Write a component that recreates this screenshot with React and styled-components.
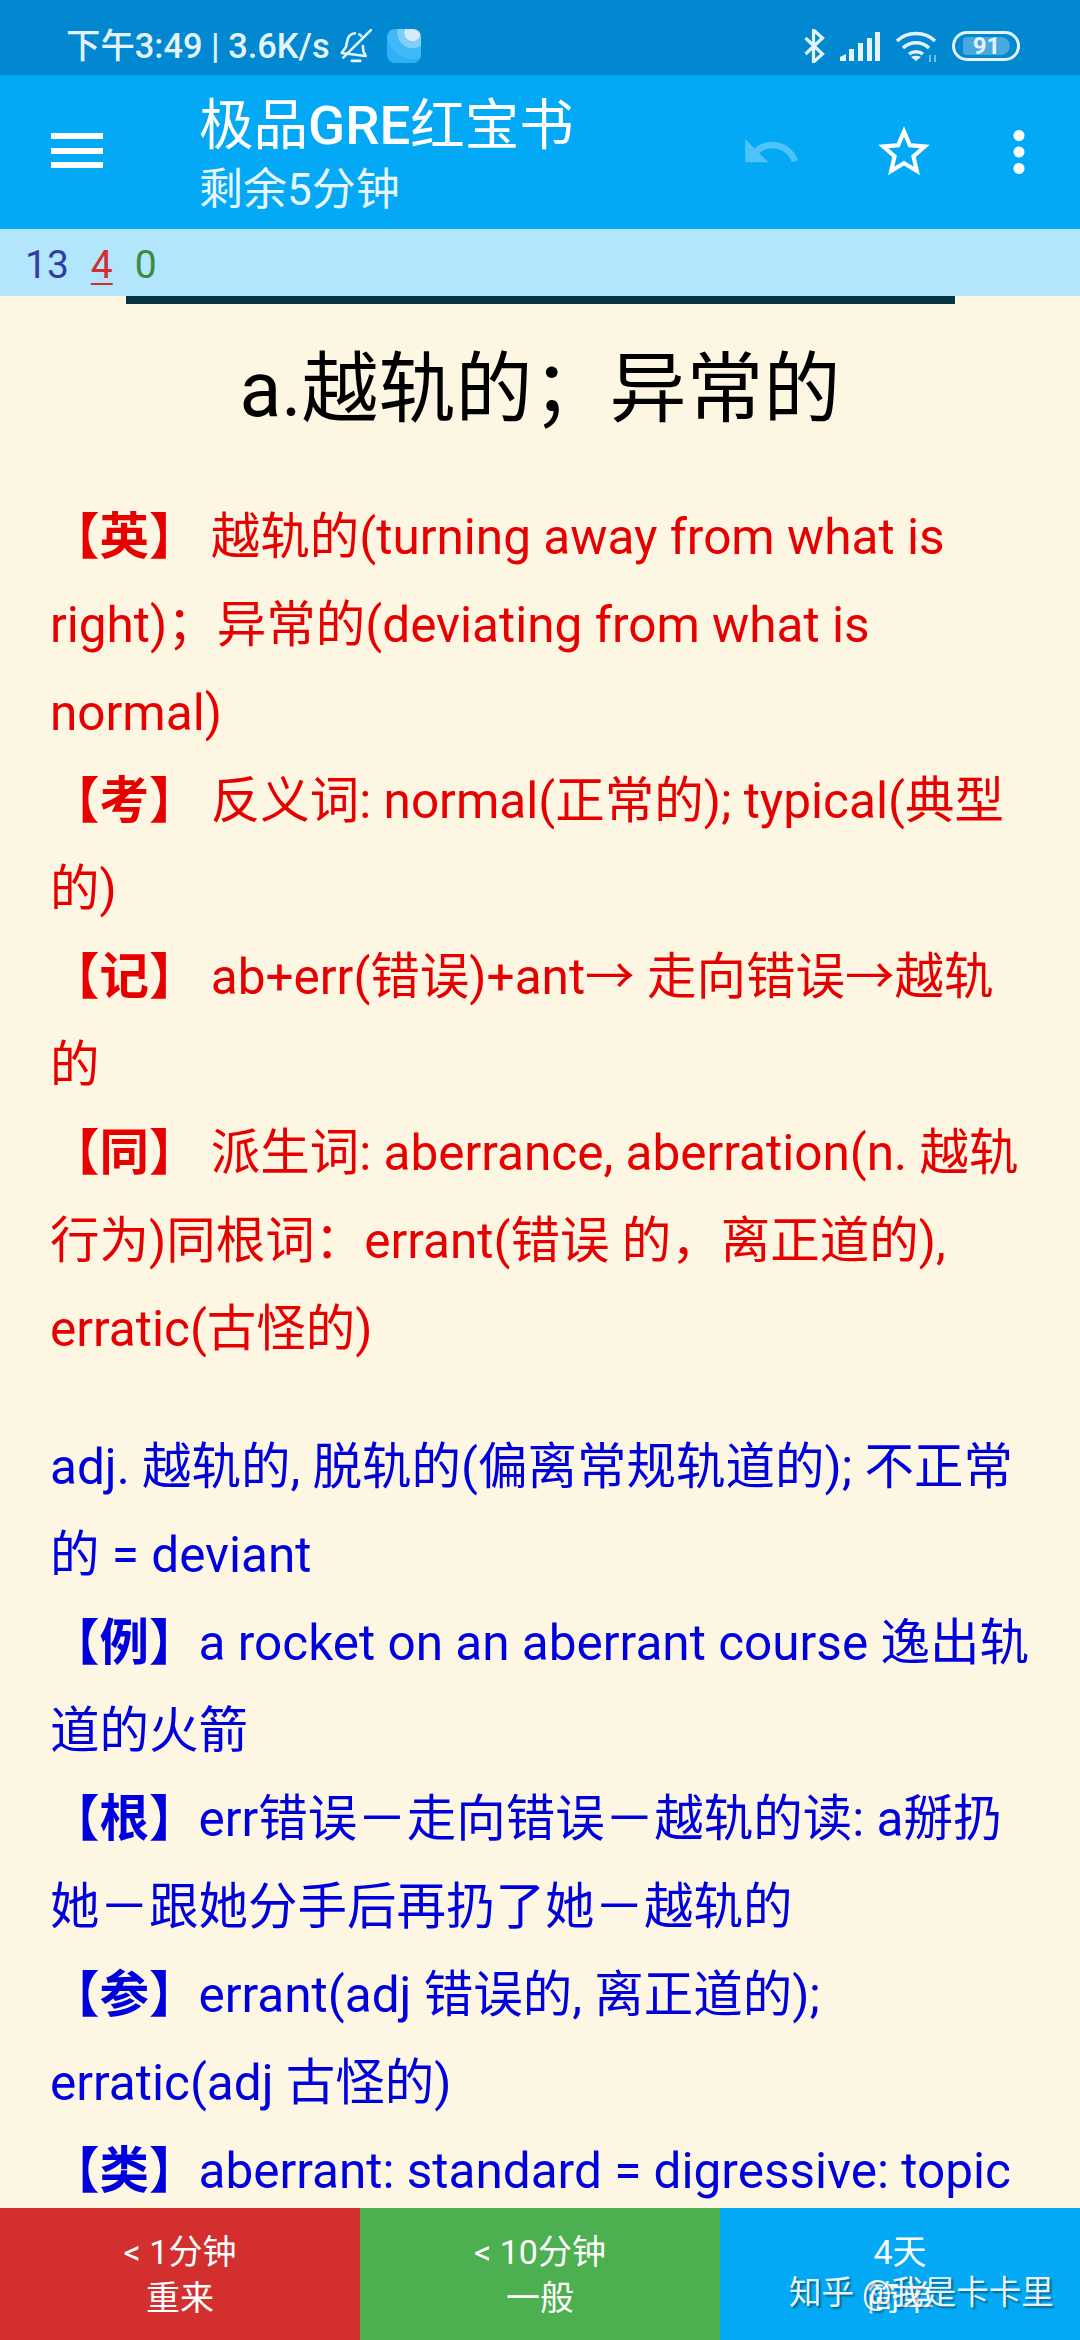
import React from 'react';
import styled, { createGlobalStyle } from 'styled-components';

const GlobalStyle = createGlobalStyle`
  html, body { margin: 0; padding: 0; background: #fdf6e3; }
  * { box-sizing: border-box; }
`;

const FONT = `Roboto, "Noto Sans CJK SC", sans-serif`;

const Screen = styled.div`
  position: relative;
  width: 1080px;
  height: 2340px;
  display: flex;
  flex-direction: column;
  overflow: hidden;
  font-family: ${FONT};
  background: #fdf6e3;
`;

const StatusBar = styled.div`
  height: 75px;
  flex: none;
  background: #0288d1;
  color: #e3f4fd;
  display: flex;
  align-items: center;
  justify-content: space-between;
  padding: 17px 60px 0 66px;
`;

const StatusGroup = styled.div`
  display: flex;
  align-items: center;
  gap: ${props => props.gap || 13}px;
`;

const StatusText = styled.span`
  font-size: 34.400px;
  font-weight: 500;
  line-height: 40px;
  white-space: nowrap;
`;

const AppDot = styled.div`
  width: 34px;
  height: 34px;
  margin-left: 5px;
  border-radius: 8px;
  background: radial-gradient(circle at 75% 12%, #d6e9fb 0 20%, #7fcdf8 21% 38%, #41b8f8 39% 65%, #2fb0f6 66%);
`;

const Battery = styled.div`
  width: 68px;
  height: 30px;
  border: 3px solid #e3f4fd;
  border-radius: 15px;
  padding: 3px 7px 3px 8px;
  display: flex;
`;

const BatteryFill = styled.div`
  flex: 1;
  background: rgba(255, 255, 255, 0.28);
  border-radius: 4px 9px 9px 4px;
  font-size: 24px;
  font-weight: 700;
  line-height: 18px;
  text-align: center;
  color: #e3f4fd;
`;

const AppBar = styled.div`
  height: 154px;
  flex: none;
  background: #03a9f4;
  color: #fff;
  display: flex;
  align-items: center;
  padding: 0 55px 0 51px;
`;

const MenuButton = styled.div`
  width: 52px;
  height: 35px;
  margin-right: 96px;
  margin-top: -3px;
  display: flex;
  flex-direction: column;
  justify-content: space-between;
`;

const MenuBar = styled.div`
  height: 6px;
  background: #fff;
`;

const TitleBlock = styled.div`
  flex: 1;
  display: flex;
  flex-direction: column;
  margin-top: 10px;
`;

const AppTitle = styled.div`
  font-size: 54.500px;
  line-height: 66px;
  white-space: nowrap;
`;

const Latin = styled.span`
  font-weight: 500;
`;

const AppSub = styled.div`
  font-size: 44px;
  line-height: 64px;
  color: #e8f7fe;
`;

const Actions = styled.div`
  display: flex;
  align-items: center;
`;

const ActionIcon = styled.svg`
  display: block;
  margin-left: ${props => props.gap}px;
`;

const CountBar = styled.div`
  height: 67px;
  flex: none;
  background: #b3e5fc;
  display: flex;
  align-items: center;
  padding: 4px 25px 0;
  font-size: 39px;
`;

const Count = styled.span`
  color: ${props => props.color};
  margin-right: 22px;
  text-decoration: ${props => (props.current ? 'underline' : 'none')};
  text-underline-offset: 5px;
  text-decoration-thickness: 2px;
`;

const ProgressLine = styled.div`
  height: 8px;
  flex: none;
  margin: 0 125px 0 126px;
  background: #073642;
`;

const Card = styled.div`
  flex: 1;
  min-height: 0;
  overflow: hidden;
  padding: 0 50px;
`;

const Word = styled.h1`
  margin: 41px -30px 58px;
  font-size: 77px;
  font-weight: 400;
  line-height: 90px;
  color: #000;
  text-align: center;
`;

const Section = styled.div`
  color: ${props => props.color};
  font-size: 49.500px;
  line-height: 88px;
  margin-bottom: 50px;
`;

const Mark = styled.b`
  font-weight: 700;
`;

const AnswerBar = styled.div`
  height: 132px;
  flex: none;
  display: grid;
  grid-template-columns: repeat(3, 1fr);
`;

const AnswerButton = styled.div`
  background: ${props => props.color};
  color: #fff;
  display: flex;
  flex-direction: column;
  align-items: center;
  justify-content: center;
  font-size: 34px;
  line-height: 46px;
  padding-top: 2px;
`;

const Watermark = styled.div`
  position: absolute;
  left: 789px;
  top: 2271px;
  font-size: 32.500px;
  line-height: 44px;
  color: rgba(255, 255, 255, 0.92);
  text-shadow: 2px 2px 2px rgba(0, 0, 0, 0.4);
  white-space: nowrap;
`;

const BellOff = () => (
  <svg width="32" height="34" viewBox="0 0 30 32" fill="none" stroke="#e3f4fd" strokeWidth="2.400" strokeLinecap="round" strokeLinejoin="round">
    <path d="M14 4c-4.500 .5-7 4-7.500 8.500L5.500 17 1.500 22.500 24 25.500c.5-1-.5-2-2-4l-.5-5.500" />
    <path d="M18 5l2 1.500" />
    <path d="M29 1L3 27" />
    <path d="M11 30h8" />
  </svg>
);

const Bluetooth = () => (
  <svg width="22" height="34" viewBox="0 0 21 34" fill="none" stroke="#e3f4fd" strokeWidth="3.200" strokeLinejoin="miter">
    <path d="M2 9l17 16-9 8V1l9 8L2 25" />
  </svg>
);

const Signal = () => (
  <svg width="40" height="29" viewBox="0 0 40 29" fill="#e3f4fd">
    <path d="M0 29v-4l6-3v7z" />
    <rect x="9" y="17" width="5" height="12" />
    <rect x="18" y="11" width="5" height="18" />
    <rect x="27" y="6" width="5" height="23" />
    <rect x="35" y="0" width="5" height="29" />
  </svg>
);

const Wifi = () => (
  <svg width="42" height="31" viewBox="0 0 42 31" fill="none" stroke="#e3f4fd" strokeWidth="3.400">
    <path d="M2 10c10-10 28-10 38 0" />
    <path d="M8 17c7-7 19-7 26 0" />
    <path d="M14 23c4-3 10-3 14 0" />
    <path d="M21 30l-5-4c3-1.600 7-1.600 10 0z" fill="#e3f4fd" stroke="none" />
    <path d="M35 24v7M40 24v7" stroke="#8fcdf0" strokeWidth="1.600" />
  </svg>
);

const Undo = () => (
  <ActionIcon gap={0} width="62" height="62" viewBox="0 0 24 24" fill="#4fc3f7">
    <path d="M12.500 8c-2.650 0-5.050.99-6.900 2.600L2 7v9h9l-3.620-3.620c1.390-1.160 3.160-1.880 5.120-1.880 3.540 0 6.550 2.310 7.600 5.500l2.370-.78C21.080 11.030 17.150 8 12.500 8z" />
  </ActionIcon>
);

const Star = () => (
  <ActionIcon gap={71} width="62" height="62" viewBox="0 0 24 24" fill="#fff">
    <path d="M22 9.240l-7.190-.62L12 2 9.190 8.630 2 9.240l5.460 4.730L5.820 21 12 17.270 18.180 21l-1.630-7.030L22 9.240zM12 15.400l-3.760 2.270 1-4.280-3.320-2.880 4.380-.38L12 6.100l1.710 4.040 4.380.38-3.320 2.880 1 4.280L12 15.400z" />
  </ActionIcon>
);

const MoreDots = () => (
  <ActionIcon gap={78} width="12" height="44" viewBox="0 0 12 44" fill="#fff">
    <circle cx="6" cy="5.500" r="5.500" />
    <circle cx="6" cy="22" r="5.500" />
    <circle cx="6" cy="38.500" r="5.500" />
  </ActionIcon>
);

const App = () => (
  <Screen>
    <GlobalStyle />
    <StatusBar>
      <StatusGroup gap={10}>
        <StatusText>下午3:49 | 3.6K/s</StatusText>
        <BellOff />
        <AppDot />
      </StatusGroup>
      <StatusGroup gap={15}>
        <Bluetooth />
        <Signal />
        <Wifi />
        <Battery>
          <BatteryFill>91</BatteryFill>
        </Battery>
      </StatusGroup>
    </StatusBar>

    <AppBar>
      <MenuButton>
        <MenuBar />
        <MenuBar />
        <MenuBar />
      </MenuButton>
      <TitleBlock>
        <AppTitle>极品<Latin>GRE</Latin>红宝书</AppTitle>
        <AppSub>剩余5分钟</AppSub>
      </TitleBlock>
      <Actions>
        <Undo />
        <Star />
        <MoreDots />
      </Actions>
    </AppBar>

    <CountBar>
      <Count color="#303f9f">13</Count>
      <Count color="#d32f2f" current>4</Count>
      <Count color="#388e3c">0</Count>
    </CountBar>
    <ProgressLine />

    <Card>
      <Word>a.越轨的；异常的</Word>
      <Section color="#e60000">
        <Mark>【英】</Mark> 越轨的(turning away from what is right)；异常的(deviating from what is normal)<br />
        <Mark>【考】</Mark> 反义词: normal(正常的); typical(典型的)<br />
        <Mark>【记】</Mark> ab+err(错误)+ant→ 走向错误→越轨的<br />
        <Mark>【同】</Mark> 派生词: aberrance, aberration(n. 越轨行为)同根词：errant(错误 的，离正道的), erratic(古怪的)
      </Section>
      <Section color="#0000dd">
        adj. 越轨的, 脱轨的(偏离常规轨道的); 不正常的 = deviant<br />
        <Mark>【例】</Mark>a rocket on an aberrant course 逸出轨道的火箭<br />
        <Mark>【根】</Mark>err错误－走向错误－越轨的读: a掰扔她－跟她分手后再扔了她－越轨的<br />
        <Mark>【参】</Mark>errant(adj 错误的, 离正道的); erratic(adj 古怪的)<br />
        <Mark>【类】</Mark>aberrant: standard = digressive: topic
      </Section>
    </Card>

    <AnswerBar>
      <AnswerButton color="#d32f2f"><span>&lt; 1分钟</span><span>重来</span></AnswerButton>
      <AnswerButton color="#4caf50"><span>&lt; 10分钟</span><span>一般</span></AnswerButton>
      <AnswerButton color="#03a9f4"><span>4天</span><span>简单</span></AnswerButton>
    </AnswerBar>
    <Watermark>知乎 @我是卡卡里</Watermark>
  </Screen>
);

export default App;
